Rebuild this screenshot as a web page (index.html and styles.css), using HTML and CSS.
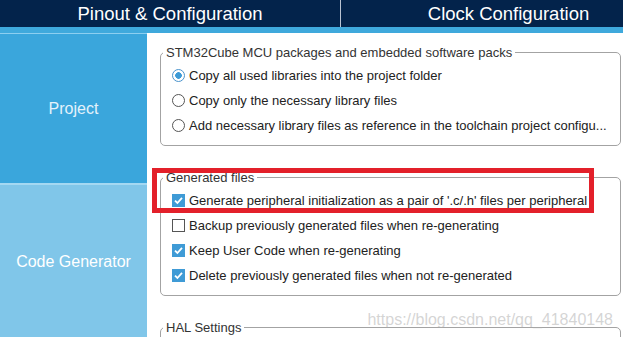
FILE: index.html
```html
<!DOCTYPE html>
<html lang="en">
<head>
    <meta charset="UTF-8">
    <title>Project Manager - Code Generator</title>
    <link rel="stylesheet" href="styles.css">
</head>
<body>
    <div class="tabs">
        <div class="tab">Pinout &amp; Configuration</div>
        <div class="tab tab-right">Clock Configuration</div>
    </div>
    <div class="stripe"></div>

    <div class="main">
        <div class="side">
            <div class="side-item">Project</div>
            <div class="side-item active">Code Generator</div>
        </div>

        <div class="content">
            <fieldset class="group">
                <legend>STM32Cube MCU packages and embedded software packs</legend>
                <div class="opt"><span class="radio on"></span>Copy all used libraries into the project folder</div>
                <div class="opt"><span class="radio"></span>Copy only the necessary library files</div>
                <div class="opt"><span class="radio"></span>Add necessary library files as reference in the toolchain project configu...</div>
            </fieldset>

            <fieldset class="group">
                <legend>Generated files</legend>
                <div class="opt">
                    <span class="check on"><svg width="13" height="13" viewBox="0 0 13 13"><path d="M3 6.6 L5.4 9 L10 3.8" fill="none" stroke="#fff" stroke-width="1.8"/></svg></span>
                    <span class="focus">Generate peripheral initialization as a pair of '.c/.h' files per peripheral</span>
                </div>
                <div class="opt"><span class="check"></span>Backup previously generated files when re-generating</div>
                <div class="opt">
                    <span class="check on"><svg width="13" height="13" viewBox="0 0 13 13"><path d="M3 6.6 L5.4 9 L10 3.8" fill="none" stroke="#fff" stroke-width="1.8"/></svg></span>
                    Keep User Code when re-generating
                </div>
                <div class="opt">
                    <span class="check on"><svg width="13" height="13" viewBox="0 0 13 13"><path d="M3 6.6 L5.4 9 L10 3.8" fill="none" stroke="#fff" stroke-width="1.8"/></svg></span>
                    Delete previously generated files when not re-generated
                </div>
            </fieldset>

            <fieldset class="group">
                <legend>HAL Settings</legend>
                <div class="opt"></div>
            </fieldset>

            <!-- red mark around the first option -->
            <div class="highlight"></div>
            <div class="watermark">https://blog.csdn.net/qq_41840148</div>
        </div>
    </div>
</body>
</html>
```

FILE: styles.css
```css
body {
    margin: 0;
    width: 623px;
    height: 337px;
    overflow: hidden;
    font-family: 'Liberation Sans', Arial, sans-serif;
    background-color: #fff;
}
.tabs {
    display: grid;
    grid-template-columns: 340px 336px;
    height: 27px;
    background-color: #03234b;
    color: #fff;
    font-size: 18.5px;
    overflow: hidden;
}
.tab {
    display: flex;
    align-items: center;
    justify-content: center;
}
.tab-right {
    border-left: 1px solid #b9c3d2;
}
.stripe {
    height: 6px;
    background-color: #3fa9dc;
}
.main {
    display: flex;
    height: 304px;
}
.side {
    width: 147px;
    flex-shrink: 0;
    display: flex;
    flex-direction: column;
}
.side-item {
    box-sizing: border-box;
    flex-shrink: 0;
    height: 150px;
    border-top: 1px solid #8ccff0;
    background-color: #3aa6dc;
    color: #e4f2fb;
    font-size: 16px;
    display: flex;
    align-items: center;
    justify-content: center;
}
.side-item.active {
    height: 156px;
    border-top: 2px solid #a4d8f2;
    background-color: #80c6e9;
    color: #fff;
}
.content {
    flex: 1;
    position: relative;
    padding: 12px 2px 0 13px;
    display: flex;
    flex-direction: column;
    gap: 24px;
    overflow: hidden;
}
.group {
    margin: 0;
    min-width: 0;
    flex-shrink: 0;
    border: 1px solid #a3a3a3;
    border-radius: 5px;
    padding: 3px 10px 7px 11px;
}
.group legend {
    font-size: 13px;
    line-height: 15px;
    color: #333;
    padding: 0 3px;
    margin-left: -9px;
}
.opt {
    display: flex;
    align-items: center;
    gap: 4px;
    height: 25px;
    font-size: 13px;
    color: #222;
    white-space: nowrap;
}
.radio {
    box-sizing: border-box;
    width: 13px;
    height: 13px;
    border: 1px solid #555;
    border-radius: 50%;
    background-color: #fff;
}
.radio.on {
    border-color: #4a93cc;
    background: radial-gradient(circle, #3d9ad6 0, #3d9ad6 3px, #fff 3.6px);
}
.check {
    box-sizing: border-box;
    width: 13px;
    height: 13px;
    border: 1px solid #555;
    background-color: #fff;
}
.check.on {
    border: none;
    background-color: #3f9bd6;
}
.check svg {
    display: block;
}
.focus {
    line-height: 15px;
    border-bottom: 1px dotted #444;
}
.highlight {
    position: absolute;
    left: 5px;
    top: 135px;
    width: 442px;
    height: 45px;
    box-sizing: border-box;
    border: 5px solid #e3202a;
}
.watermark {
    position: absolute;
    right: 10px;
    top: 278px;
    font-size: 16px;
    line-height: 18px;
    color: rgba(170, 170, 170, 0.5);
}
```
